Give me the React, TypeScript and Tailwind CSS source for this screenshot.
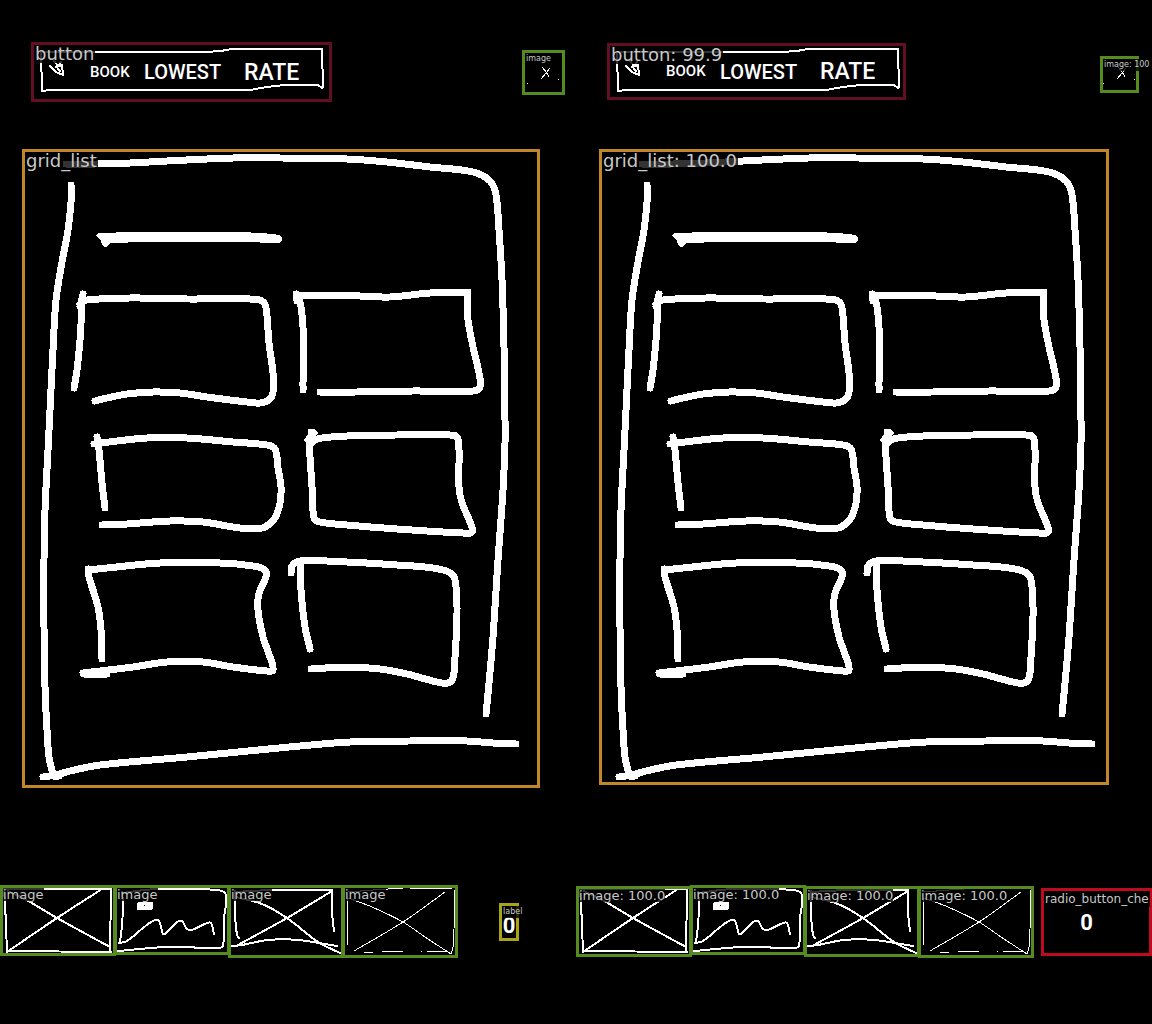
import type { ReactNode } from 'react';

/** Turns "x,y x,y ..." into a smooth pen stroke running through every point. */
function curve(points: string): string {
  const p = points.split(' ').map((pair) => pair.split(',').map(Number));
  let d = `M${p[0][0]} ${p[0][1]}`;
  for (let i = 0; i < p.length - 1; i++) {
    const a = p[Math.max(i - 1, 0)];
    const b = p[i];
    const c = p[i + 1];
    const e = p[Math.min(i + 2, p.length - 1)];
    const len = Math.hypot(c[0] - b[0], c[1] - b[1]);
    const t1 = len / (Math.hypot(c[0] - a[0], c[1] - a[1]) || 1) / 3;
    const t2 = len / (Math.hypot(e[0] - b[0], e[1] - b[1]) || 1) / 3;
    d += `C${b[0] + (c[0] - a[0]) * t1} ${b[1] + (c[1] - a[1]) * t1} ${c[0] - (e[0] - b[0]) * t2} ${c[1] - (e[1] - b[1]) * t2} ${c[0]} ${c[1]}`;
  }
  return d;
}

function Sketch({ view, pen, strokes, children }: { view: string; pen: number; strokes: string[]; children?: ReactNode }) {
  return (
    <svg
      viewBox={view}
      className="block h-auto w-full"
      fill="none"
      stroke="white"
      strokeWidth={pen}
      strokeLinecap="round"
      strokeLinejoin="round"
      shapeRendering="crispEdges"
      aria-hidden="true"
    >
      {strokes.map((s) => (
        <path key={s} d={curve(s)} />
      ))}
      {children}
    </svg>
  );
}

function Tag({ size, children }: { size: string; children: ReactNode }) {
  return (
    <figcaption className={`absolute top-0 left-0 z-10 bg-black/80 whitespace-nowrap text-[#c8c8c8] ${size}`}>
      {children}
    </figcaption>
  );
}

const LARGE = 'px-px text-[18px] leading-[18px]';
const MEDIUM = 'text-[13px] leading-[13px]';
const RADIO = 'px-px text-[12px] leading-[16px]';
const SMALL = 'px-px text-[8px] leading-[12px]';

const BUTTON = [
  '41,52 202,52',
  '202,52 220,51 232,49',
  '232,49 322,49',
  '322,49 323,87',
  '41,52 42,91',
  '42,91 52,90 250,90',
  '250,90 267,87 287,85 317,85 322,88',
];

const GRID = [
  '71,185 71,202 68,230 62,262 56,300 53,350 50,410 48,450 45,510 44,560 44,627 45,687 47,730 49,757 53,775',
  '43,777 56,775 70,771 100,765 187,757 300,746 350,742 410,741 467,741 493,743 516,744',
  '53,776 59,776',
  '66,164 97,164 130,163 167,161 233,158 280,158 347,159 387,162 430,167 473,172 490,181 496,195 499,230 502,280 504,347 505,420 505,443 503,490 498,560 493,637 489,683 486,714',
  '83,294 80,306',
  '81,303 81,325 80,340 77,370 74,388',
  '80,304 87,300 130,298 187,299 250,299 262,301 266,308 269,343 273,373 273,392 269,400 260,403 247,402 207,397 180,393 153,392 127,394 107,398 95,401',
  '296,294 297,301',
  '299,298 301,307 303,327 303,390',
  '297,296 330,295 360,296 390,297 430,293 468,292',
  '468,292 467,303 468,320 473,347 479,373 480,387 473,391 413,391 357,392 320,392',
  '97,437 99,450 102,483 105,508',
  '94,444 117,441 147,438 187,438 233,442 267,445 275,449 278,468 281,487 280,503 275,518 265,527 252,529 233,527 203,522 170,521 127,524 102,525',
  '311,432 311,443',
  '314,433 308,440',
  '309,442 312,487 314,518 320,522 347,525 397,529 463,533 472,532 470,522 462,503 459,487 459,450 457,437 450,435 397,435 347,436 317,439 310,445',
  '88,569 89,577 98,607 101,630 102,659',
  '89,570 107,568 160,563 220,563 253,566 265,570 266,577 259,593 258,610 263,637 270,657 273,670 267,671 233,667 203,662 167,662 133,667 83,673',
  '84,674 107,674',
  '291,573 292,566 300,561 347,562 397,565 433,568 452,574 456,587 457,617 455,657 453,678 448,683 437,682 407,674 380,669 347,667 311,669',
  '300,562 301,590 305,627 310,649',
];

const IMAGES = [
  {
    x: 0,
    pen: 2,
    strokes: ['0,889 111,889', '111,890 110,952', '4,892 5,903 7,952', '7,951 111,952', '7,952 57,918 102,889', '8,891 30,902 57,918 110,947'],
  },
  {
    x: 114,
    pen: 2,
    strokes: [
      '122,892 123,903 122,925 120,942',
      '119,943 127,941 143,928 153,921 159,921 163,934 166,933 177,922 182,921 187,929 192,930 207,923 211,923 214,934',
      '122,893 157,889 217,890 226,895 224,918 223,946 218,948 167,947 118,951',
    ],
  },
  {
    x: 228,
    pen: 2,
    strokes: [
      '235,891 235,915 237,935 239,938',
      '235,892 273,890 332,890',
      '332,890 332,912 334,931',
      '238,945 287,918 332,891',
      '236,897 262,904 287,918 318,942 340,953',
      '232,946 242,945 268,940 298,940 337,946',
    ],
  },
  {
    x: 342,
    pen: 1,
    strokes: [
      '354,951 403,922 445,892',
      '348,898 372,907 403,922 425,937 451,954',
      '348,892 388,889 403,889',
      '410,889 453,888',
      '347,898 347,945',
      '454,890 454,930 453,947 451,954',
      '364,952 373,952',
      '382,951 403,951',
      '421,951 422,951',
      '427,951 448,951',
    ],
  },
];

type PanelProps = {
  tags: { button: string; icon: string; grid: string; image: string };
  header: { row: string; button: string; image: string; buttonView: string; imageView: string };
  grid: { box: string; view: string };
  row: string;
  thumbs: { box: string; top: number; height: number }[];
  children: ReactNode;
};

function Panel({ tags, header, grid, row, thumbs, children }: PanelProps) {
  return (
    <section className="min-w-0 overflow-hidden">
      <div className={`flex h-[149px] items-start justify-between ${header.row}`}>
        <figure className={`relative border-3 border-[#620e24] ${header.button}`}>
          <Tag size={LARGE}>{tags.button}</Tag>
          <Sketch view={header.buttonView} pen={2} strokes={BUTTON}>
            <path d="M54 61L58 66L61 62M50 66L56 72L63 75L62 65L56 67M58 69L60 71" />
          </Sketch>
          <button
            type="button"
            className="absolute inset-0 flex items-center pl-14 font-[Roboto,'Liberation_Sans',sans-serif] leading-none font-medium text-white"
          >
            <span className="w-[54px] text-left text-[15px]">BOOK</span>
            <span className="w-[100px] text-left text-[20px]">LOWEST</span>
            <span className="text-[23px]">RATE</span>
          </button>
        </figure>
        <figure className={`relative border-3 border-[#568b20] ${header.image}`}>
          <Tag size={SMALL}>{tags.icon}</Tag>
          <Sketch
            view={header.imageView}
            pen={1}
            strokes={['542,67 546,72 549,77', '550,68 546,73 541,79', '527,83 527,84', '558,79 559,79']}
          />
        </figure>
      </div>

      <figure className={`relative border-3 border-[#c08628] ${grid.box}`}>
        <Tag size={LARGE}>{tags.grid}</Tag>
        <Sketch view={grid.view} pen={7} strokes={GRID}>
          <path
            fill="white"
            stroke="none"
            d="M96 236Q97 232 103 233L128 232H238L263 233L280 235Q285 239 280 243L240 242H145L110 243L108 246Q105 249 102 245L101 241Z"
          />
        </Sketch>
      </figure>

      <div className={`flex items-start ${row}`}>
        {IMAGES.map((image, i) => (
          <figure key={image.x} className={`relative w-[116px] shrink-0 border-3 border-[#568b20] ${thumbs[i].box}`}>
            <Tag size={MEDIUM}>{tags.image}</Tag>
            <Sketch view={`${image.x + 3} ${thumbs[i].top + 3} 110 ${thumbs[i].height - 6}`} pen={image.pen} strokes={image.strokes}>
              {i === 1 && (
                <>
                  <rect x="137" y="902" width="16" height="8" rx="2" fill="white" stroke="none" />
                  <rect x="144" y="905" width="1" height="1" fill="black" stroke="none" />
                </>
              )}
            </Sketch>
          </figure>
        ))}
        {children}
      </div>
    </section>
  );
}

const ZERO = "block text-center font-[Roboto,'Liberation_Sans',sans-serif] text-[22px] leading-[24px] font-bold text-white";

export default function App() {
  return (
    <main className="grid min-h-screen grid-cols-2 content-start overflow-hidden bg-black font-['DejaVu_Sans',sans-serif]">
      <Panel
        tags={{ button: 'button', icon: 'image', grid: 'grid_list', image: 'image' }}
        header={{
          row: 'pt-[42px] pr-[11px] pl-[31px]',
          button: 'w-[301px]',
          image: 'mt-2 w-[43px]',
          buttonView: '34 45 295 54',
          imageView: '525 53 37 39',
        }}
        grid={{ box: 'mr-9 ml-[22px]', view: '25 152 512 633' }}
        row="pt-[97px]"
        thumbs={[
          { box: '', top: 885, height: 71 },
          { box: '-ml-0.5', top: 885, height: 70 },
          { box: '-ml-0.5', top: 885, height: 73 },
          { box: '-ml-0.5', top: 885, height: 73 },
        ]}
      >
        <figure className="relative mt-[18px] ml-[41px] w-5 shrink-0 border-3 border-[#a8a416] pt-2">
          <Tag size={SMALL}>label</Tag>
          <span className={ZERO}>0</span>
        </figure>
      </Panel>
      <Panel
        tags={{ button: 'button: 99.9', icon: 'image: 100', grid: 'grid_list: 100.0', image: 'image: 100.0' }}
        header={{
          row: 'pt-[43px] pr-[13px] pl-[31px]',
          button: 'w-[299px]',
          image: 'mt-[13px] w-[39px]',
          buttonView: '34 46 293 51',
          imageView: '527 59 33 31',
        }}
        grid={{ box: 'mr-[43px] ml-[23px]', view: '26 152 504 630' }}
        row="pt-[100px]"
        thumbs={[
          { box: 'mt-px', top: 886, height: 71 },
          { box: '-ml-0.5', top: 885, height: 70 },
          { box: 'mt-px -ml-0.5', top: 886, height: 71 },
          { box: 'mt-px -ml-0.5', top: 886, height: 72 },
        ]}
      >
        <figure className="relative mt-[3px] ml-[7px] min-w-0 flex-1 border-3 border-[#c00a20] pt-5 pb-[18px]">
          <Tag size={RADIO}>radio_button_che</Tag>
          <span className={`${ZERO} pr-5`}>0</span>
        </figure>
      </Panel>
    </main>
  );
}
